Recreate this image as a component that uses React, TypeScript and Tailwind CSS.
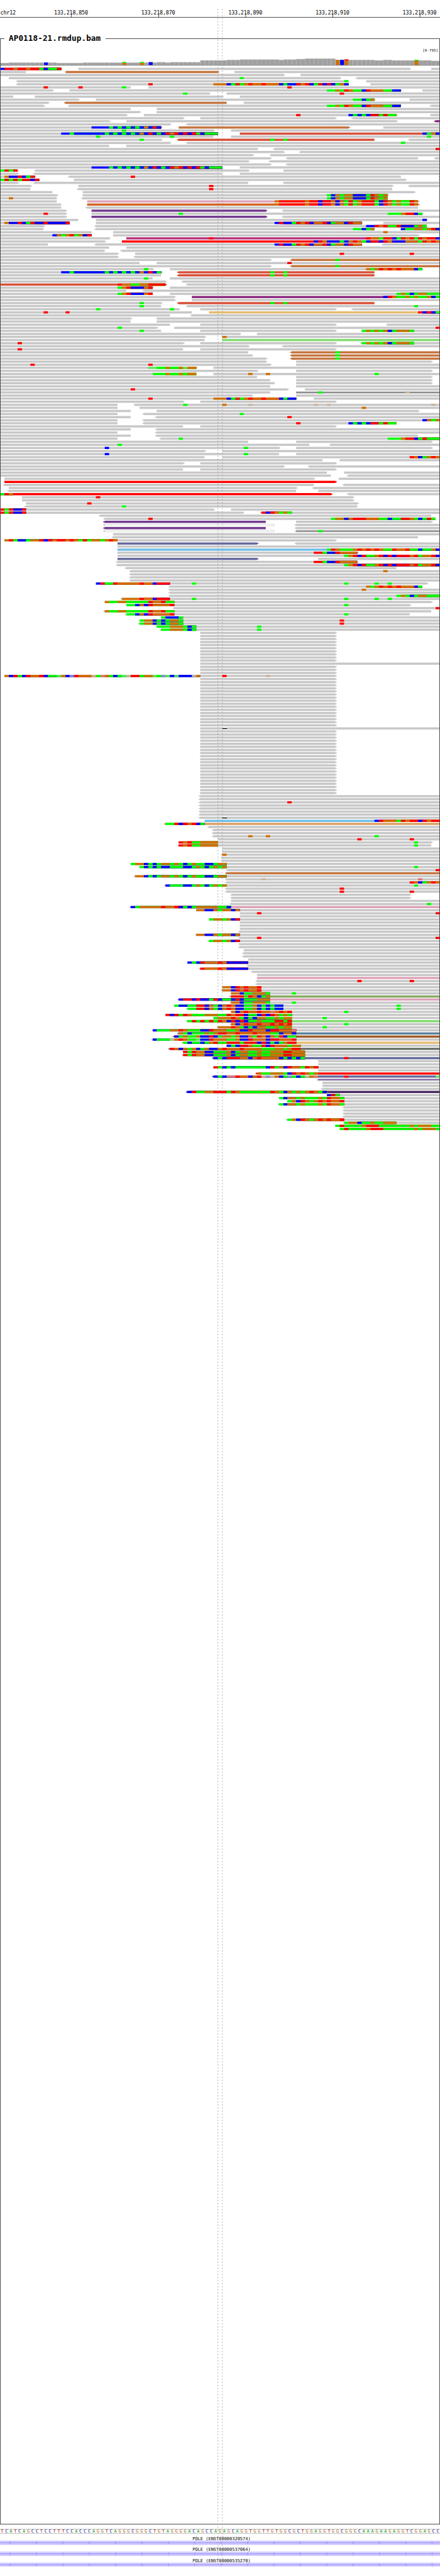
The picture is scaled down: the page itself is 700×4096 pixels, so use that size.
import React from "react";

const COLUMNS = 101;
const WIDTH = 1000;
const ROW_TOP = 154;
const ROW_PITCH = 7;
const ROW_HEIGHT = 5;

const edge = (column: number) => Math.round((column * WIDTH) / COLUMNS);

const BASE_FILL: Record<string, string> = {
  A: "#00ff00",
  C: "#0000ff",
  G: "#d07005",
  T: "#ff0000",
  a: "#62e862",
  c: "#8c8ce0",
  g: "#c9b79f",
  t: "#e07878",
};

const READ_FILL: Record<string, string> = {
  brown: "#c5753f",
  brick: "#d84f38",
  purple: "#8b2c7f",
  pink: "#dca3b7",
  rust: "#d06423",
  violet: "#723a8f",
  magenta: "#b9307a",
  red: "#ff0000",
  tan: "#e6bb70",
  sand: "#dca064",
  mint: "#80dd6e",
  slate: "#65699d",
  sky: "#6fbde6",
  olive: "#88a860",
  steel: "#5b82a0",
  sienna: "#9f5a28",
  ash: "#6b756b",
  indigo: "#4a2860",
};

const INSET_FILL: Record<string, string> = {
  hollow: "#ffffff",
  dark: "#8d8d8d",
  plum: "#8866a8",
};

/*
 * One line per alignment row. "a-b" is a read from column a to column b, with
 * "<" or ">" on the side of its arrow and an optional colour; "12ACG" lists
 * mismatched bases from column 12 on (lower case: low quality, D: deletion).
 * "xN" repeats the row.
 */
const ROWS = `
0-14>:tan 18-94> 99-101 0CTTGTTGTTACAAT
0-6 15-50>:brown <54-101
0-65> 69-101
2-78> <82-101 55A
<4-80 84-101 79A
<4-80 85-101 34T 49GGGCATAGTGGTGGGCACCTGTCATCTCAGC
0-30 34-101 10T 18T 28A 66T
0-12> 16-92> 97-101 75AAGATGAACTGGGAACC
0-48> 52-101 42A 78T
0-3 8-51> 55-101
0-18> 22-86> 94-101 81AACAG
0-11> <15-52:brown 56-101
0-10> <16-92 <99-101 75AAGATGAACTGGGAACC
0-30 36-101
0-32> 36-101
0-29> 33-91> <99-101 68T 80CACACTTATAA
0-42> 46-77> <81-101
0-25> 29-91> <100-101:purple
0-39> <43-101
0-37> 41-80>:brown 88-101 21CCCCACACACACGCTC
0-49> 53-101 28A
0-50 55-101:brick 14CCACCCCCCCACACACACGCTCACTGTCTCTACAAA 97CAGC
0-49 53-101 22A 39A 98A
0-37> <41-86:brick <94-101 32A 62A 65A
0-39> <43-101 92A
0-25 29-101
0-59> <63-101 100T
0-65> <69-101
0-58> 62-101
0-62> <66-96 <100-101
0-57> <62-101
0-62> <66-101
0-51 55-101 21CCCCACACACACGCTCACTGTCTCTACAAA
0-4> 8-57> 65-101 0ATAT
0-4> <8-51 55-101
0-8> <16-92 <101-101 1GCCTCAT 30T
0-9 17-93> <101-101 0ATATATTCT
0-4> <8-57 65-101
0-7> 18-90> <94-101 48T
0-7 <18-90 48T
0-12 19-95>
0-13> 19-89> 75ACGAGGCCCATGAG
0-13 <19-89 2G 75ACGAGGCCCATGAG
0-13 20-96>:pink 63GTTTTTTGTTCTTGCGATAGTTTACTGAGAATG
0-14 20-96>:rust 63GTTTTTTGTTCTTGCGATAGTTTACTGAGAATG
0-14 <20-96
0-15> 21-61>:violet <65-101
0-15> 21-97> 10T 41A 89AAAGTTCA
0-15> 21-61>:violet <65-101
0-18 22-98> 97C
0-16 22-83> 88-101 1GCCTCATCCTCCCCT 63CTCCATGTCGGTCAGGCTGG
0-10> <22-98 84CCTGTAATCCCAGA
0-10 <22-86 92-101 81AACAG 92CAAGGAGTC
0-21 26-101 88G
0-21 26-96> 12CGAGTAGCT
0-25> 29-101:magenta 48T 84TGGATTCATGTATGTTC
0-24> 28-101:red 72CTGCCCACGTGACTTCTGCCCGGGATGTG
0-11 <22-83 <88-101 63CTCCATGTCGGTCAGGCTGG
0-25 29-101
0-24 <28-101
0-27> 31-101 78T 94T
0-27> <31-101
0-62> <67-101:brown 77A
0-32 36-101 66T
0-62> <67-101:brown 77A
0-35> 39-97> 33A 84GAGTGTGTGGGCA
0-37> <41-86:brick 14CCACCCCCCCACACACACGCTCA 62A 65A
0-37 <41-86:brick 62A 65A
0-35 39-101 33A
0-38> <42-101
0-38>:brick <43-101 27TGGAAGGTTTT
0-35> 39-101 27AGTCCCGT
0-29 <33-101
0-35 39-101 27AGTCCCGT 91AGACAGGAAA
0-40> 44-101:purple 88CTGAAGAGAAGCA
0-40> 44-101
0-37> <41-86:brick 32A 62A 65A
0-37 <43-101 32A 95A
0-41> 46-77> <81-101 22A 39A
0-44 48-101:tan 10T 15T 96TCTCA
0-39 <44-101
0-30> 36-101
0-30 36-101
0-39 46-77> <89-101
0-36> 40-101 27A 100T
0-37 46-77> 83-101 32A 83AGAGAGCAGGGA
0-55> 59-101
0-47> 51-101 51G
0-47 51-101:mint
0-42> 46-77> <83-101 4T 83AGAGAGCAGGGA
0-57> <65-101
0-42 46-77> 4T
0-57 <67-101:brown 77A
0-58 <67-101:brown 77A
0-61> <67-101:brown 77A
0-61> 68-99>
0-62> 68-101 7T 34T
0-45> 49-101 34aaAAGAAGaGG
0-59> 68-99>
0-45 49-101 35AAAGAAGAGG 57G 61G 86A
0-59 68-99>
0-62 68-99>
0-63 68-99>
0-62 68-101
0-66> 70-101 30T
0-62 68-101:dark 73A 93g
0-58 68-101
0-68> 72-101 34T 49GGGCATAGTGGTGGGCACC
0-42> 46-77>
0-27 <31-101 42A 51G 57g 72g 75g 99g
0-27 32-101 83G
0-30 36-96>
0-27 <33-101 55A
0-30 <36-101 66T
0-27 <33-101 97CGAG
0-27 <33-91 68T 80CACACTTATAA
0-42 46-77>
0-30 <36-101
0-27 <36-101
0-30 <36-96
0-27 <37-101 41A 89AAAGTTCATAAA
0-57 68-99>
0-71 <76-101 27A
0-64> 68-99> 24C 56A
0-47> 51-101
0-64 68-101 24C 56A
0-47 51-101 94TGCAGTG
0-74 78-101
0-42> 46-77>
0-65> <71-101
0-42 46-77>
0-75 79-101
0-76 <80-101
1-72> <78-101
1-77>:red
<1-72 <79-101
2-68> <72-101
<2-68 73-101
0-76>:red <80-101 0ATG
5-81> 22T
5-81>
6-82> 20T
<6-82 28A
0-49> 53-101 0TATCCT
0-56 <60-101 0TATCCT 60TCTGAGA
<23-99
<24-100 34T 76AGGCGTTTGGGAACAATTGACATA
<24-61:violet 68-99>
<24-63:hollow <68-101
<24-61:violet <68-101
<24-63:hollow <68-101:dark 73A
26-101
<26-96
1-77> 1GTACCAGGTCTGTTGTGATAGGAGTG
27-59>:slate <68-101
27-101
27-101:sky 75ATGAAAGTGTGTGAATGGTAACAAGC
27-82> 72TTACCTGGGG
27-101 79AGTCTAAGTCTCTTTGTAGGTC
27-59>:slate 73-101
<27-82 72TTACCTGGGG
<27-101 79AGTCTAAGTCTCTTTGTAGGTC
<29-91
<30-101 88G
x3 <30-101
22-98> 22CTAATGGGGGTGGCTTT 44A 79A 86A 89A
<39-97 84GAGTGTGTGGGCA
<39-101 83G
<39-101
<39-101 91AGACAGGAAA
<28-101 28GGGGTGGCTTT 44A 79A 86A 89A
24-99> 24GAAGGAAAAATGGTAA
29-94> 29AACGCTGGGGT 79A
<40-101 100T
<24-99 24GAAGGAAAAATGGTAA
<29-94 29AACGCTGGGGT 79A
37-101 37ACCCA
32-101 32AGGCACAGGA 78T
<32-101 32AGGCACAGGA 78T
36-101 36AAAGGGACA 59A
<37-101 37AAGGGACA 59A
x10 46-77>
46-101
x3 46-77>
1-77> 1GCTACTGGTCAAaGCcTGGGgAtGACAagTTAGGaAcaCaCCCgG 51T 61g
x16 46-77>
46-101 51D
x21 46-77>
x2 <46-101
<46-101 66T
x4 <46-101
<46-101 51D
47-101:sky 86CTGGGATGTTCTGTT
<38-101:sand 38AATCTGTCA
<48-101
x2 <49-101
<49-101 57G 61G 86A
50-101 82T 94T
41-99> 41TGTAAGGGG 95A
<41-99 41TGTAAGGGG 95A
x2 51-101
<51-101 51G
x2 <51-101
30-101 30AGGCACAGGAGACAGAACCAGG
32-101 32ACACACCAAACCAGACAGAG 95A
52-101 100T
<52-101:brown
<31-101 31GGCACAGGAGACAGAACCAGG
<52-101 60g 96t
<52-101 94TGCAGTG
<38-101 38CAAACCAGACAGAG 95A
<52-101 78T
<52-101 78T 94T
x2 53-94>
53-101
<53-101 98A
<30-101:pink 30CAGGGGGTGGTCACAGGGGGAAC
45-101 45GGCCGAGGCG
55-101 59T 100T
55-101
48-101 48AGGAGCT
x3 55-101
<55-101
<45-101 45GGCCGAGGCG
<55-101 59T 100T
<48-101 48AGGAGCT
x2 <55-101
56-101
x2 <56-101
57-101
43-101 43CACTGGGTGCCCCC
<57-101
<46-101 46TGGGTGCCCCC
<58-101
59-101
59-101:pink
<59-101 82T 94T
<59-101
51-101 51GGCTGTGGT
<51-101 51GGCTGTGGT
53-101 53GGCAAGGGA 67A
<53-101:olive 53TTTATGCAG
<41-101:pink 41CTTCTCCATCAACTCAAAGGG
<53-101 53GGCAAGGGA 67A
40-101 40ACCAATTCGACGTGCCAAGCACACC 91A
<43-101 43AATTCGACGTGCCAAGCACACC 91A
53-101 53GCGTGGTGGtGTGT 79A
38-101 38TCTATGAAAGGGAATGTTCAACTCTGAGA
49-101 49AGGGTGACACGGAAGAGG 74A
<43-101:mint 43ATATATATGCTCTCAAGAAATTAT
<53-101 53GCGTGGTGGTGTGT 79A
<50-101 50GGGTGACACGGAAGAGG 74A
35-101 35CAAAGGTGAAACCTGGGAAGCCTGGGCTTGGGt
<41-101:steel 41GACAAAGAGTTGGTGGGTGGGAACGGC
<40-101:sienna 40CAGAAGCCTCAGGAGCCGATGCGATCAA
<35-101 35CAAAgGTGAAaCCTGGGAAGCCTGGGCTTGGGT
<42-101:tan 42ACAACAGTAATTTATTTCTCACAGTT
52-101 52CACTTGAATCTGGGAGG
<39-101:ash 39TGCGAGCAGCCGTGGGTGGGGAAAGGAGTT
42-101 42TATGGCCAAAGCAGGAAGAAGGGTTGGG
<42-101 42TATGGCCAAAGCAGGAAGAAGGGTTGGG
<49-101:slate 49CACTTTGGCGTGGGGCACACA 79T
x2 73-101
49-101 49TACACAAAAAAACTAGCTGGATGT
73-101
<59-101:red 59GAAGGGACTGTGAG
<49-101:slate 49CACttTGGCGTgcgGCAcACAgGt 79T 100a
<73-101:plum
x2 74-101
<74-101
<43-101:indigo 43CTAAGGTTTATGAAAAAAATGACGAGAGTGAC
75-101 75CTA
64-101 64ACGGAGAAAGATGGA
66-101 66AGCTGAGTGTGGT
<64-101 64ACGGAGAAAGATGGA
x4 <79-101
<66-101 66AGCTGAGTGTGGT
79-101 79AGGCAAGAAGGG
77-101 77ATAAAAGTTTAAAAAAAGAGGGAA
78-101 78ATAAAAGTTTAAAAAAAGAGGGA
`
  .trim()
  .split("\n")
  .flatMap((line) => {
    const repeat = line.match(/^x(\d+) (.*)$/);
    return repeat ? Array<string>(Number(repeat[1])).fill(repeat[2]) : [line];
  });

function Read({ token, y }: { token: string; y: number }) {
  const m = token.match(/^(<?)(\d+)-(\d+)(>?)(?::(\w+))?$/);
  if (!m) return null;
  const x0 = edge(Number(m[2]));
  const x1 = edge(Number(m[3]));
  const inset = m[5] ? INSET_FILL[m[5]] : undefined;
  const fill = (m[5] && READ_FILL[m[5]]) || "#c8c8c8";
  const head = (x: number, d: number) =>
    `M${x} ${y + 0.4}L${x + 2 * d} ${y + 1.2}L${x + 3.8 * d} ${y + 2.1}V${y + 2.9}L${x + 2 * d} ${y + 3.8}L${x} ${y + 4.6}Z`;
  return (
    <>
      <path
        fill={fill}
        d={`M${x0} ${y}H${x1}V${y + ROW_HEIGHT}H${x0}Z${m[1] ? head(x0, -1) : ""}${m[4] ? head(x1, 1) : ""}`}
      />
      {inset && (
        <rect x={x0 + (m[5] === "hollow" ? 0.5 : 0)} y={y + 1} width={x1 - x0 - 1} height={ROW_HEIGHT - 2} fill={inset} />
      )}
    </>
  );
}

function Bases({ token, y }: { token: string; y: number }) {
  const m = token.match(/^(\d+)(\w+)$/);
  if (!m) return null;
  const start = Number(m[1]);
  if (m[2] === "D") {
    const x = edge(start);
    return (
      <>
        <rect x={x} y={y} width={11} height={ROW_HEIGHT} fill="#fff" />
        <rect x={x} y={y + 2} width={11} height={2} fill="#000" />
      </>
    );
  }
  const end = edge(start + m[2].length);
  const runs = [...m[2]].map((b, i) => ({ b, i })).filter(({ b, i }) => i === 0 || m[2][i - 1] !== b);
  // Each run reaches to the end of the group so that no seam shows between colours.
  return (
    <>
      {runs.map(({ b, i }) => {
        const x = edge(start + i);
        return <rect key={i} x={x} y={y} width={end - x} height={ROW_HEIGHT} fill={BASE_FILL[b]} />;
      })}
    </>
  );
}

function Alignments() {
  return (
    <g>
      {ROWS.map((row, i) => {
        const y = ROW_TOP + i * ROW_PITCH;
        const tokens = row.split(" ");
        return (
          <g key={i}>
            {tokens.map((t, j) => (t.includes("-") ? <Read key={j} token={t} y={y} /> : null))}
            {tokens.map((t, j) => (t.includes("-") ? null : <Bases key={j} token={t} y={y} />))}
          </g>
        );
      })}
    </g>
  );
}

// [first column, top] of each step of the coverage profile
const STEPS: [number, number][] = [
  [0, 143], [2, 142], [13, 143], [19, 142], [36, 141], [38, 142], [39, 141], [46, 137],
  [52, 136], [55, 135], [64, 136], [65, 135], [68, 134], [70, 133], [77, 136], [86, 137],
  [88, 136], [90, 137], [99, 138],
];

// [column, top, colour, cap height, cap colour]
const VARIANTS: [number, number, string, number, string][] = [
  [10, 142, "#0000ff", 0, "#ff0000"],
  [28, 141, "#d07005", 2, "#00ff00"],
  [32, 141, "#d07005", 2, "#00ff00"],
  [34, 141, "#0000ff", 0, "#ff0000"],
  [77, 136, "#d07005", 0, "#00ff00"],
  [78, 136, "#0000ff", 0, "#0000ff"],
  [79, 135, "#d07005", 2, "#ff0000"],
  [95, 136, "#d07005", 2, "#00ff00"],
];

function Coverage() {
  return (
    <g>
      {Array.from({ length: COLUMNS }, (_, k) => {
        const top = STEPS.filter(([c]) => c <= k).at(-1)![1];
        const x = edge(k);
        const w = edge(k + 1) - x;
        return (
          <g key={k}>
            <rect x={x} y={top} width={w} height={148 - top} fill="#b4b4b4" />
            <rect x={x + 1} y={top + 1} width={w - 1} height={147 - top} fill="#a0a0a0" />
          </g>
        );
      })}
      {VARIANTS.map(([k, top, fill, cap, capFill]) => {
        const x = edge(k) + 1;
        return (
          <g key={k}>
            <rect x={x} y={top} width={9} height={148 - top} fill={fill} />
            {cap > 0 ? (
              <rect x={x} y={top} width={9} height={cap} fill={capFill} />
            ) : (
              <rect x={x + 4} y={top} width={1} height={1} fill={capFill} />
            )}
          </g>
        );
      })}
      <rect x={0} y={148} width={WIDTH} height={1} fill="#6e6e6e" />
      <text x={960.5} y={117} fontSize={8} textLength={35}>
        [0-795]
      </text>
    </g>
  );
}

function Ruler() {
  return (
    <svg className="block h-[52px] w-[700px] shrink-0" viewBox="0 0 1000 74.2857">
      <text x={0.8} y={32.2} fontSize={12} textLength={35}>
        chr12
      </text>
      {[850, 870, 890, 910, 930].map((n, i) => (
        <g key={n}>
          <text x={123 + i * 198.02} y={32.2} fontSize={12} textLength={77}>
            {`133,218,${n}`}
          </text>
          <rect x={162 + Math.round(i * 198.02)} y={31} width={1} height={8} />
        </g>
      ))}
      <rect x={0} y={39} width={1000} height={1} />
    </svg>
  );
}

const SEQUENCE =
  "TCATCAGCCTCCTTTCCACCCAGGTCAGGGCGGGCTGTAGGGGACAGCCAG" +
  "AGCAGGTGGTTGTGGCGCTGGAGGTGGCGGGCAAAGAAGAGGTCGGAGCC";

const LETTER_CLASS: Record<string, string> = {
  A: "text-[#0f960f]",
  C: "text-[#0a0a8c]",
  G: "text-[#a5641e]",
  T: "text-[#aa0a0a]",
};

function Sequence() {
  return (
    <div className="mt-[7px] grid h-[8px] w-[700px] shrink-0 grid-cols-[repeat(101,minmax(0,1fr))] border-y border-[#bcbfbc] text-center text-[7px] leading-[6px]">
      {[...SEQUENCE].map((base, i) => (
        <span key={i} className={LETTER_CLASS[base]}>
          {base}
        </span>
      ))}
    </div>
  );
}

const TRANSCRIPTS = ["ENST00000320574", "ENST00000537064", "ENST00000535270"];

function Genes() {
  return (
    <svg className="block h-[67px] w-[700px] shrink-0" viewBox="0 5755.7143 1000 95.7143">
      {TRANSCRIPTS.map((id, i) => {
        const y = 5771 + i * 25;
        return (
          <g key={id}>
            <rect x={0} y={y} width={1000} height={i === 2 ? 9 : 10} fill="#d3ccff" />
            <rect x={0} y={y + 4} width={1000} height={2} fill="#a299ff" />
            {Array.from({ length: 17 }, (_, k) => (
              <path key={k} d={`M${20.3 + k * 59.95} ${y + 5}l3.7 -4v8z`} fill="#a299ff" />
            ))}
            <text x={437.5} y={y - 1} fontSize={10} textLength={132}>
              {`POLE (${id})`}
            </text>
          </g>
        );
      })}
    </svg>
  );
}

export default function App() {
  return (
    <main className="relative flex h-[4096px] w-[700px] flex-col overflow-hidden bg-white font-['DejaVu_Sans_Mono',monospace] text-black">
      <Ruler />
      <fieldset className="h-[3962px] w-[700px] min-w-0 shrink-0 border border-[#4d4d4d]">
        <legend className="ml-[6px] h-[19px] w-[161px] pl-[7px] text-[12.6px] leading-[18px] font-bold tracking-[0.115px] whitespace-nowrap">
          AP0118-21.rmdup.bam
        </legend>
        <svg className="block h-[3942px] w-[698px]" viewBox="1.42857 101.42857 997.14286 5631.42857">
          <Coverage />
          <Alignments />
        </svg>
      </fieldset>
      <Sequence />
      <Genes />
      <svg className="pointer-events-none absolute inset-0 h-[4096px] w-[700px]" viewBox="0 0 1000 5851.42857">
        <path d="M495.5 20V5826M505.5 20V5826" stroke="#8c8c8c" strokeWidth={1} strokeDasharray="3 4" fill="none" />
      </svg>
    </main>
  );
}
